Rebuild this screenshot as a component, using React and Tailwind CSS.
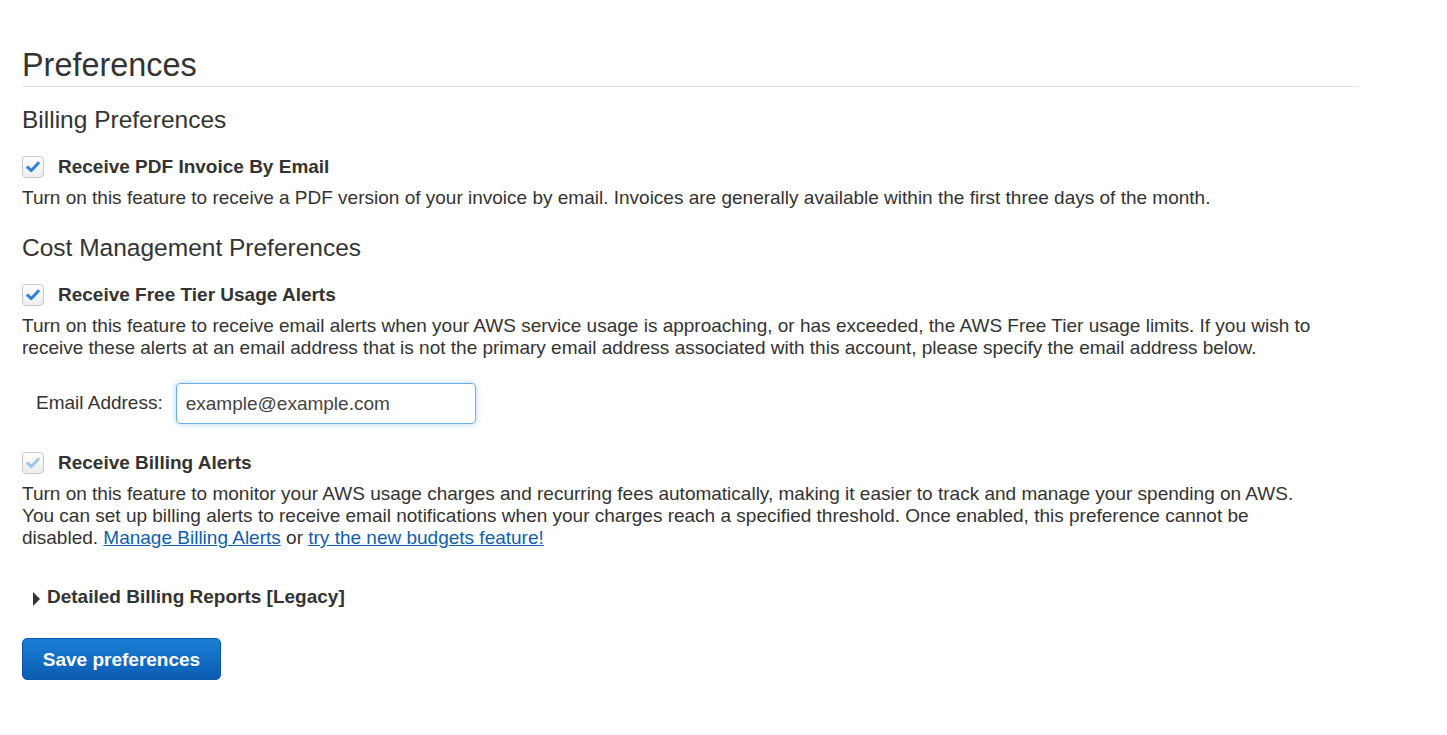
import { useState } from "react";

function CheckBox({ checked, disabled, onChange }) {
  return (
    <button
      type="button"
      onClick={disabled ? undefined : onChange}
      className="w-[22px] h-[22px] shrink-0 rounded-[4px] border border-[#c8c8c8] bg-gradient-to-b from-[#ffffff] to-[#ececec] flex items-center justify-center"
    >
      {checked && (
        <svg width="14" height="12" viewBox="0 0 14 12">
          <path
            d="M1.8 6.4 L5.3 9.6 L12.2 2.2"
            fill="none"
            stroke={disabled ? "#9cc6ec" : "#2b82d9"}
            strokeWidth="3"
            strokeLinecap="round"
            strokeLinejoin="round"
          />
        </svg>
      )}
    </button>
  );
}

function CheckRow({ label, checked, disabled, onChange, className }) {
  return (
    <div className={`flex items-center h-[24px] ${className}`}>
      <CheckBox checked={checked} disabled={disabled} onChange={onChange} />
      <span className="ml-[14px] font-bold text-[19px] text-[#333]">{label}</span>
    </div>
  );
}

export default function App() {
  const [pdf, setPdf] = useState(true);
  const [freeTier, setFreeTier] = useState(true);
  const [email, setEmail] = useState("example@example.com");

  return (
    <div
      className="min-h-screen bg-white text-[#333] px-[22px]"
      style={{ fontFamily: '"Liberation Sans", Arial, sans-serif' }}
    >
      <div className="w-[1337px] flex flex-col">
        <h1 className="mt-[47px] text-[32.4px] leading-[36px] pb-[3px] border-b border-[#e3e3e3] text-[#333]">
          Preferences
        </h1>

        <h2 className="mt-[19px] text-[24.5px] leading-[28px] text-[#333]">Billing Preferences</h2>
        <CheckRow
          className="mt-[21px]"
          label="Receive PDF Invoice By Email"
          checked={pdf}
          onChange={() => setPdf(!pdf)}
        />
        <p className="mt-[8px] max-w-[1305px] text-[19px] leading-[22px]">
          Turn on this feature to receive a PDF version of your invoice by email. Invoices are generally
          available within the first three days of the month.
        </p>

        <h2 className="mt-[25px] text-[24.5px] leading-[28px] text-[#333]">Cost Management Preferences</h2>
        <CheckRow
          className="mt-[21px]"
          label="Receive Free Tier Usage Alerts"
          checked={freeTier}
          onChange={() => setFreeTier(!freeTier)}
        />
        <p className="mt-[8px] max-w-[1305px] text-[19px] leading-[22px]">
          Turn on this feature to receive email alerts when your AWS service usage is approaching, or has
          exceeded, the AWS Free Tier usage limits. If you wish to receive these alerts at an email address
          that is not the primary email address associated with this account, please specify the email
          address below.
        </p>

        <div className="mt-[24px] flex items-center">
          <label className="ml-[14px] text-[19px]">Email Address:</label>
          <input
            value={email}
            onChange={(e) => setEmail(e.target.value)}
            className="ml-[13px] w-[300px] h-[41px] px-[9px] text-[19px] text-[#444] rounded-[4px] border border-[#6aaeea] shadow-[0_0_6px_rgba(82,160,230,0.45)] outline-none"
          />
        </div>

        <CheckRow className="mt-[27px]" label="Receive Billing Alerts" checked disabled />
        <p className="mt-[8px] max-w-[1305px] text-[19px] leading-[22px]">
          Turn on this feature to monitor your AWS usage charges and recurring fees automatically, making it
          easier to track and manage your spending on AWS.
          <br />
          You can set up billing alerts to receive email notifications when your charges reach a specified
          threshold. Once enabled, this preference cannot be disabled.{" "}
          <a href="#" className="text-[#0f5fae] underline">
            Manage Billing Alerts
          </a>{" "}
          or{" "}
          <a href="#" className="text-[#0f5fae] underline">
            try the new budgets feature!
          </a>
        </p>

        <div className="mt-[36px] flex items-center h-[24px] ml-[11px]">
          <svg width="8" height="14" viewBox="0 0 8 14" className="mt-[3px]">
            <path d="M0 0 L7 7 L0 14 Z" fill="#333" />
          </svg>
          <span className="ml-[6px] font-bold text-[19px]">Detailed Billing Reports [Legacy]</span>
        </div>

        <div className="mt-[29px]">
          <button className="w-[199px] h-[42px] pt-[2px] rounded-[5px] bg-gradient-to-b from-[#1b7fd6] to-[#0b5db2] border border-[#0a57a6] text-white font-bold text-[19px]">
            Save preferences
          </button>
        </div>
      </div>
    </div>
  );
}
